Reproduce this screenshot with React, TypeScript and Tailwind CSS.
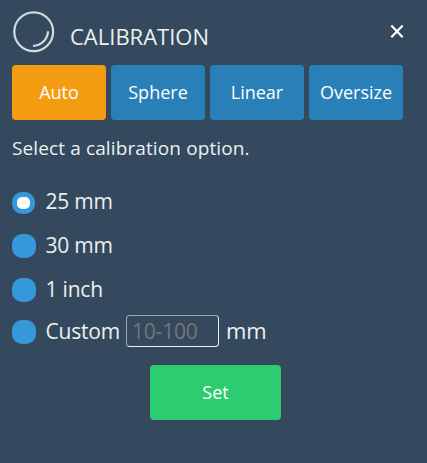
import { useState } from "react";

const modes = ["Auto", "Sphere", "Linear", "Oversize"];

function Radio({ checked, onSelect }: { checked: boolean; onSelect: () => void }) {
  return (
    <button
      role="radio"
      aria-checked={checked}
      onClick={onSelect}
      className={
        checked
          ? "mt-0.5 mr-px flex h-[22px] w-[23px] shrink-0 items-center justify-center rounded-[10px] bg-[#3498db]"
          : "h-6 w-6 shrink-0 rounded-[10px] bg-[#3498db]"
      }
    >
      {checked && <span className="h-3 w-[13px] rounded-[5px] bg-white" />}
    </button>
  );
}

export default function App() {
  const [mode, setMode] = useState("Auto");
  const [size, setSize] = useState("25 mm");

  return (
    <main className="flex h-[463px] w-[427px] flex-col bg-[#34495e] pl-3 font-['Open_Sans',sans-serif] text-[#ecf0f1]">
      <header className="flex h-[65px] shrink-0 items-start">
        <svg className="mt-[10px] h-11 w-11 shrink-0" viewBox="0 0 44 44" fill="none" stroke="#d3d9dd">
          <circle cx="21.7" cy="21.7" r="19.4" strokeWidth="2.2" />
          <path d="M36 21.2A15 15 0 0 1 21 35.8" strokeWidth="2.3" />
        </svg>
        <h1 className="mt-5 ml-[14px] text-[22px] leading-8">CALIBRATION</h1>
        <button aria-label="Close" className="mt-[23px] mr-[22px] ml-auto h-4 w-4">
          <svg className="h-4 w-4" viewBox="0 0 16 16" stroke="white" strokeWidth="2.2">
            <path d="M2.3 2.6L13.7 14.2M13.7 2.6L2.3 14.2" />
          </svg>
        </button>
      </header>

      <nav className="flex shrink-0 gap-[5px]">
        {modes.map((m) => (
          <button
            key={m}
            onClick={() => setMode(m)}
            className={`h-[55px] w-[94px] rounded pb-0.5 text-lg text-white ${mode === m ? "bg-[#f39c12]" : "bg-[#2980b9]"}`}
          >
            {m}
          </button>
        ))}
      </nav>

      <p className="mt-[14px] text-[19px] leading-7 tracking-[0.12px]">Select a calibration option.</p>

      <div role="radiogroup" className="mt-7 flex flex-col text-[21px] leading-6 tracking-[-0.2px]">
        {["25 mm", "30 mm", "1 inch"].map((s) => (
          <div key={s} className="flex h-11 items-start gap-[9.5px]">
            <Radio checked={size === s} onSelect={() => setSize(s)} />
            <span className="-mt-px">{s}</span>
          </div>
        ))}
        <div className="-mt-0.5 flex h-[34px] items-start">
          <Radio checked={size === "Custom"} onSelect={() => setSize("Custom")} />
          <span className="-mt-px ml-[9.5px] w-[80.5px]">Custom</span>
          <input
            placeholder="10-100"
            className="-mt-[5px] h-8 w-[93px] rounded border border-t-[#a2a6a9] border-r-[#ecf0f1] border-b-[#ecf0f1] border-l-[#a2a6a9] bg-transparent px-[5px] text-[21px] tracking-[-0.2px] placeholder:text-[#757575]"
          />
          <span className="-mt-0.5 ml-[7px] text-[22px] tracking-normal">mm</span>
        </div>
      </div>

      <button className="mt-[11px] ml-[138px] h-[55px] w-[131px] shrink-0 rounded bg-[#2ecc71] pb-0.5 text-lg text-white">
        Set
      </button>
    </main>
  );
}
